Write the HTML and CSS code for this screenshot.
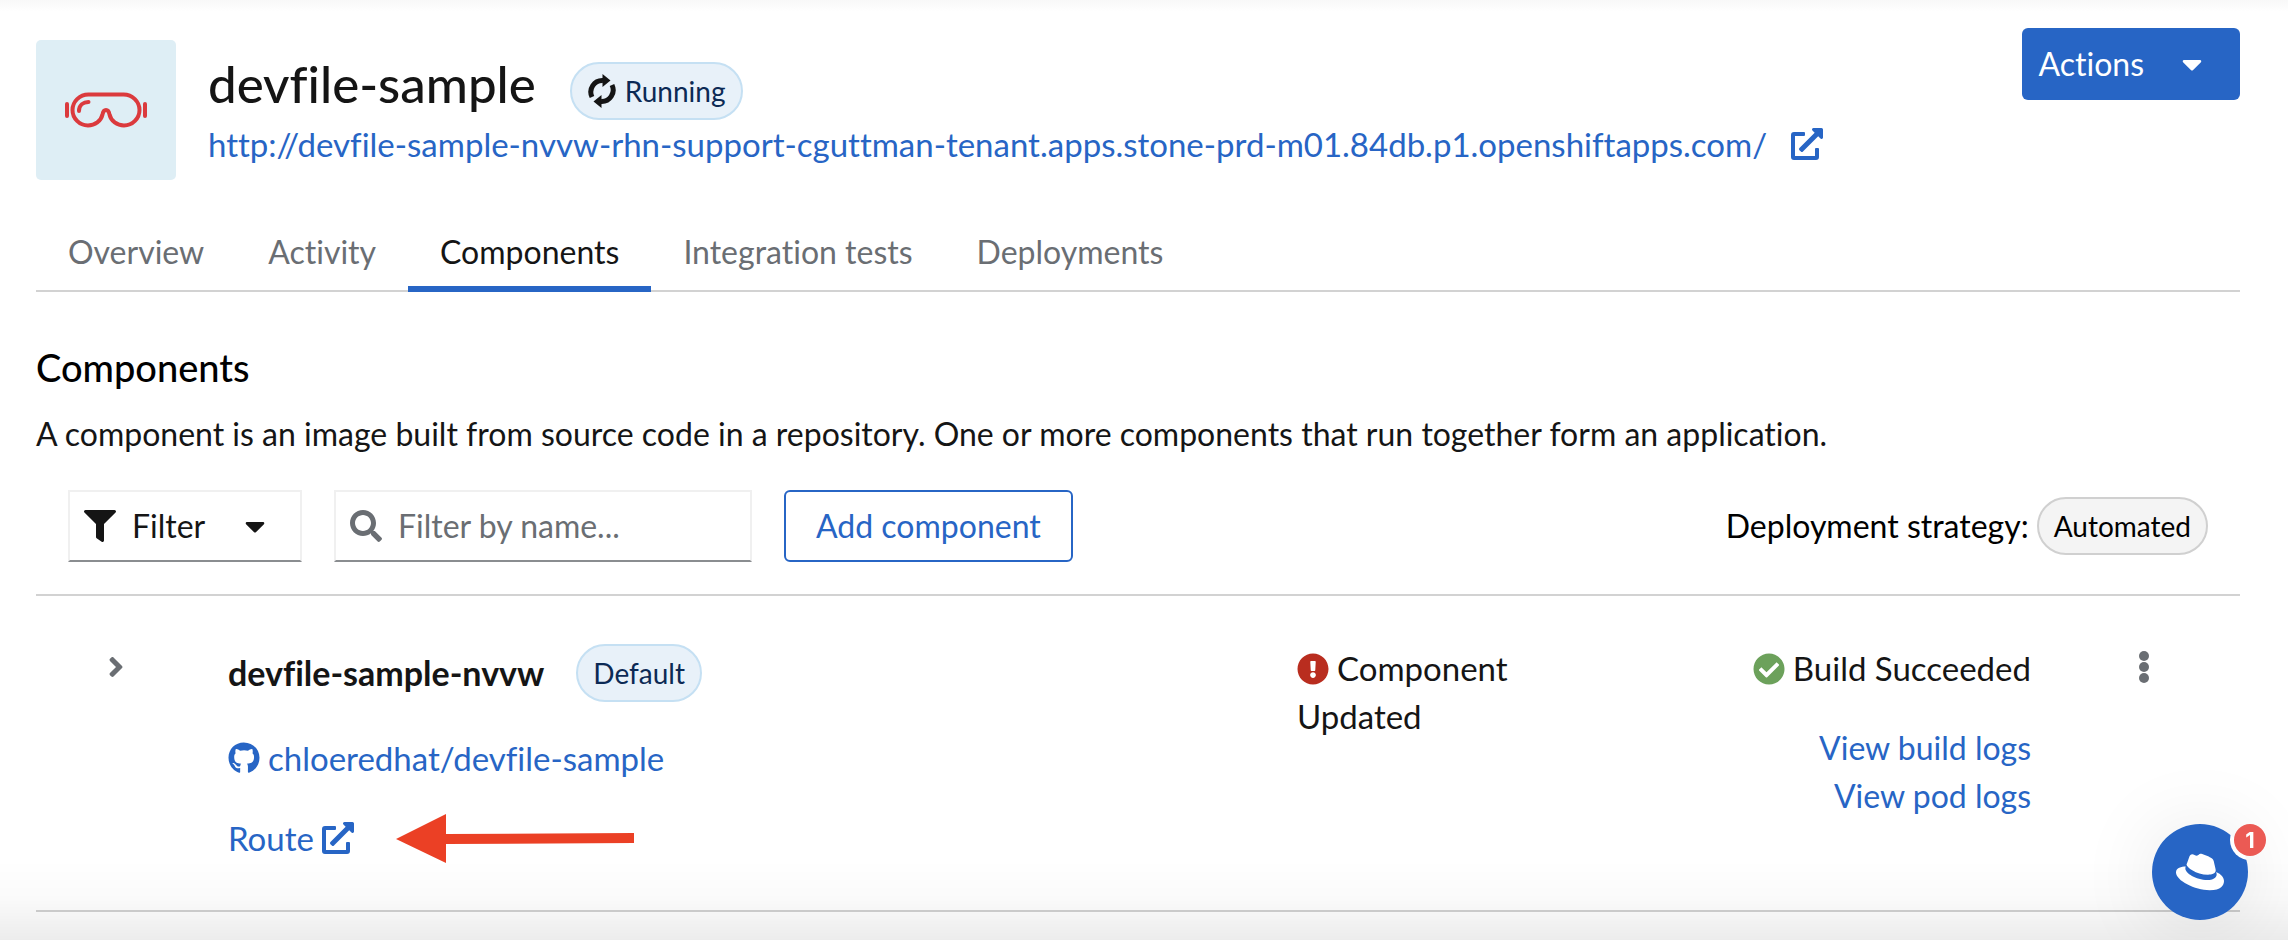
FILE: index.html
```html
<!DOCTYPE html>
<html lang="en">
<head>
<meta charset="utf-8">
<title>devfile-sample</title>
<link rel="stylesheet" href="styles.css">
</head>
<body>
<svg class="defs" aria-hidden="true">
  <symbol id="external" viewBox="0 0 512 512"><path d="M432,320H400a16,16,0,0,0-16,16V448H64V128H208a16,16,0,0,0,16-16V80a16,16,0,0,0-16-16H48A48,48,0,0,0,0,112V464a48,48,0,0,0,48,48H400a48,48,0,0,0,48-48V336A16,16,0,0,0,432,320ZM488,0h-128c-21.37,0-32.05,25.91-17,41l35.73,35.73L135,320.37a24,24,0,0,0,0,34L157.67,377a24,24,0,0,0,34,0L435.28,133.32,471,169c15,15,41,4.5,41-17V24A24,24,0,0,0,488,0Z"/></symbol>
  <symbol id="caret" viewBox="0 0 320 512"><path d="M31.3 192h257.3c17.8 0 26.7 21.5 14.1 34.1L174.1 354.8c-7.8 7.8-20.5 7.8-28.3 0L17.2 226.1C4.6 213.5 13.5 192 31.3 192z"/></symbol>
</svg>

<main class="page">
  <header class="app-header">
    <div class="app-icon">
      <svg viewBox="0 0 84 36" width="84" height="36" fill="none" stroke="#db3a3d" stroke-width="4" stroke-linecap="round">
        <path d="M24.500 2.500H59.500C68.500 2.500 75.500 9.500 75.500 18C75.500 26.500 68.500 33.500 60 33.500C53 33.500 47 29 45.500 22.500C45 19.500 44 18 42 18S39 19.500 38.500 22.500C37 29 31 33.500 24 33.500C15.500 33.500 8.500 26.500 8.500 18C8.500 9.500 15.500 2.500 24.500 2.500Z"/>
        <path d="M3 12V24M81 12V24M15 19C15 13 19.500 10 24.500 10"/>
      </svg>
    </div>
    <div class="app-info">
      <div class="title-row">
        <h1 class="app-title">devfile-sample</h1>
        <span class="label label-blue">
          <svg class="icon-label" viewBox="0 0 30 36" fill="none" stroke="#151515" stroke-width="5"><path d="M5 24A11.500 11.500 0 0 1 16 7.500M25 12A11.500 11.500 0 0 1 14 28.500"/><path d="M15.500 1L23.500 7.500L15.500 14ZM14.500 22L6.500 28.500L14.500 35Z" fill="#151515" stroke="none"/></svg>
          Running
        </span>
      </div>
      <a class="link app-url" href="#">http://devfile-sample-nvvw-rhn-support-cguttman-tenant.apps.stone-prd-m01.84db.p1.openshiftapps.com/ <svg class="icon"><use href="#external"/></svg></a>
    </div>
    <button class="btn btn-primary" type="button">Actions <svg class="icon-caret"><use href="#caret"/></svg></button>
  </header>

  <nav class="tabs">
    <a class="tab" href="#">Overview</a>
    <a class="tab" href="#">Activity</a>
    <a class="tab tab-active" href="#" aria-current="page">Components</a>
    <a class="tab" href="#">Integration tests</a>
    <a class="tab" href="#">Deployments</a>
  </nav>

  <section>
    <h2 class="section-title">Components</h2>
    <p class="section-text">A component is an image built from source code in a repository. One or more components that run together form an application.</p>

    <div class="toolbar">
      <button class="field filter" type="button">
        <svg class="icon" viewBox="0 0 512 512"><path d="M487.976 0H24.028C2.71 0-8.047 25.866 7.058 40.971L192 225.941V432c0 7.831 3.821 15.170 10.237 19.662l80 55.980C298.020 518.690 320 507.493 320 487.980V225.941l184.947-184.970C520.021 25.896 509.338 0 487.976 0z"/></svg>
        Filter
        <svg class="icon-caret"><use href="#caret"/></svg>
      </button>
      <label class="field search">
        <svg class="icon" viewBox="0 0 512 512"><path d="M505 442.700L405.300 343c-4.500-4.500-10.600-7-17-7H372c27.600-35.300 44-79.700 44-128C416 93.100 322.900 0 208 0S0 93.100 0 208s93.100 208 208 208c48.300 0 92.700-16.400 128-44v16.300c0 6.400 2.500 12.500 7 17l99.700 99.700c9.400 9.400 24.600 9.400 33.900 0l28.300-28.300c9.400-9.400 9.400-24.600.1-34zM208 336c-70.700 0-128-57.200-128-128 0-70.700 57.200-128 128-128 70.700 0 128 57.200 128 128 0 70.700-57.200 128-128 128z"/></svg>
        <input class="search-input" type="text" placeholder="Filter by name..." aria-label="Filter by name">
      </label>
      <button class="btn btn-secondary" type="button">Add component</button>
      <div class="strategy">Deployment strategy: <span class="label label-grey">Automated</span></div>
    </div>

    <article class="component">
      <button class="icon-button toggle" type="button" aria-label="Expand">
        <svg viewBox="0 0 256 512" width="16" height="32"><path d="M224.300 273l-136 136c-9.400 9.400-24.600 9.400-33.900 0l-22.600-22.600c-9.400-9.400-9.400-24.600 0-33.900l96.400-96.400-96.400-96.400c-9.400-9.400-9.400-24.600 0-33.900L54.300 103c9.400-9.400 24.600-9.400 33.900 0l136 136c9.500 9.400 9.500 24.600.1 34z"/></svg>
      </button>
      <div class="component-main">
        <div class="name-row"><h3 class="component-name">devfile-sample-nvvw</h3><span class="label label-blue">Default</span></div>
        <a class="link inline-link" href="#"><svg class="icon" viewBox="0 0 496 512"><path d="M165.900 397.400c0 2-2.300 3.600-5.200 3.600-3.300.3-5.600-1.300-5.600-3.600 0-2 2.300-3.600 5.200-3.600 3-.3 5.600 1.300 5.600 3.600zm-31.100-4.500c-.7 2 1.300 4.300 4.300 4.900 2.600 1 5.600 0 6.200-2s-1.300-4.300-4.300-5.200c-2.600-.7-5.500.3-6.200 2.300zm44.200-1.700c-2.900.7-4.900 2.600-4.600 4.900.3 2 2.900 3.300 5.900 2.600 2.900-.7 4.900-2.600 4.600-4.600-.3-1.900-3-3.200-5.900-2.900zM244.800 8C106.100 8 0 113.300 0 252c0 110.900 69.800 205.800 169.500 239.200 12.800 2.300 17.300-5.600 17.300-12.100 0-6.200-.3-40.400-.3-61.400 0 0-70 15-84.700-29.800 0 0-11.400-29.100-27.800-36.600 0 0-22.900-15.700 1.600-15.400 0 0 24.900 2 38.600 25.800 21.900 38.600 58.600 27.500 72.900 20.900 2.300-16 8.800-27.100 16-33.700-55.900-6.200-112.300-14.300-112.300-110.500 0-27.500 7.600-41.300 23.600-58.900-2.600-6.500-11.100-33.300 2.600-67.900 20.900-6.500 69 27 69 27 20-5.600 41.500-8.500 62.800-8.500s42.800 2.900 62.800 8.500c0 0 48.100-33.600 69-27 13.700 34.700 5.200 61.400 2.600 67.900 16 17.700 25.800 31.500 25.800 58.900 0 96.500-58.900 104.200-114.800 110.500 9.200 7.900 17 22.900 17 46.400 0 33.700-.3 75.400-.3 83.600 0 6.500 4.600 14.400 17.300 12.100C428.200 457.800 496 362.900 496 252 496 113.300 383.500 8 244.800 8z"/></svg>chloeredhat/devfile-sample</a>
        <div class="route-row">
          <a class="link inline-link" href="#">Route<svg class="icon"><use href="#external"/></svg></a>
          <svg class="arrow" viewBox="0 0 238 50" width="238" height="50" fill="#eb4025"><path d="M0 26L50 1V21L238 20V30L50 31V50Z"/></svg>
        </div>
      </div>
      <div class="status"><svg class="icon icon-text icon-danger" viewBox="0 0 512 512"><path d="M504 256c0 136.997-111.043 248-248 248S8 392.997 8 256C8 119.083 119.043 8 256 8s248 111.083 248 248zm-248 50c-25.405 0-46 20.595-46 46s20.595 46 46 46 46-20.595 46-46-20.595-46-46-46zm-43.673-165.346l7.418 136c.347 6.364 5.609 11.346 11.982 11.346h48.546c6.373 0 11.635-4.982 11.982-11.346l7.418-136c.375-6.874-5.098-12.654-11.982-12.654h-63.383c-6.884 0-12.356 5.780-11.981 12.654z"/></svg>Component Updated</div>
      <div class="build">
        <div class="build-state"><svg class="icon icon-text icon-success" viewBox="0 0 512 512"><path d="M504 256c0 136.967-111.033 248-248 248S8 392.967 8 256 119.033 8 256 8s248 111.033 248 248zM227.314 387.314l184-184c6.248-6.248 6.248-16.379 0-22.627l-22.627-22.627c-6.248-6.249-16.379-6.249-22.628 0L216 308.118l-70.059-70.059c-6.248-6.248-16.379-6.248-22.628 0l-22.627 22.627c-6.248 6.248-6.248 16.379 0 22.627l104 104c6.249 6.249 16.379 6.249 22.628.001z"/></svg>Build Succeeded</div>
        <div class="logs"><a class="link" href="#">View build logs</a><a class="link" href="#">View pod logs</a></div>
      </div>
      <button class="icon-button kebab" type="button" aria-label="Component actions">
        <svg viewBox="0 0 12 32" width="12" height="32"><circle cx="6" cy="5" r="5"/><circle cx="6" cy="16" r="5"/><circle cx="6" cy="27" r="5"/></svg>
      </button>
    </article>
  </section>
</main>

<div class="fade"></div>
<button class="chat" type="button" aria-label="Open chat, 1 unread">
  <svg class="chat-icon" viewBox="0 0 96 96" width="96" height="96">
    <defs><mask id="notch"><rect width="96" height="96" fill="#fff"/><circle cx="98" cy="16" r="20" fill="#000"/></mask></defs>
    <circle cx="48" cy="48" r="48" fill="#2765c5" mask="url(#notch)"/>
    <svg x="24" y="24" width="48" height="48" viewBox="0 0 512 512"><path fill="#fff" d="M341.520 285.560c33.650 0 82.340-6.940 82.340-47 .22-6.740.86-1.820-20.880-96.240-4.620-19.150-8.680-27.840-42.310-44.650-26.090-13.340-82.920-35.370-99.730-35.370-15.660 0-20.200 20.170-38.870 20.170-18 0-31.310-15.060-48.120-15.060-16.140 0-26.660 11-34.780 33.620-27.500 77.550-26.280 74.270-26.120 78.270 0 24.800 97.640 106.260 228.470 106.260M429 254.840c4.650 22 4.650 24.350 4.650 27.250 0 37.660-42.330 58.560-98 58.560-125.740.08-235.910-73.650-235.910-122.330a49.550 49.550 0 0 1 4.060-19.720C58.560 200.860 0 208.930 0 260.630c0 84.670 200.630 189 359.490 189 121.790 0 152.510-55.080 152.510-98.590 0-34.200-29.590-73-83-96.200"/></svg>
  </svg>
  <span class="badge">1</span>
</button>
</body>
</html>
```
FILE: styles.css
```css
* { box-sizing: border-box; }

body {
  margin: 0;
  background: #fff;
  color: #151515;
  font: 32px/48px Lato, "Open Sans", sans-serif;
  font-variant-ligatures: none;
}

button, input { font: inherit; font-variant-ligatures: none; color: inherit; }
button { cursor: pointer; }
h1, h2, h3, p { margin: 0; }

.defs { position: absolute; width: 0; height: 0; }
.icon { width: 32px; height: 32px; flex: none; fill: currentColor; }
.icon-caret { width: 20px; height: 32px; fill: currentColor; }

.page {
  padding: 28px 48px 0 36px;
  background: linear-gradient(#f8f8f8, #fff 12px);
}

.link { color: #2765c5; text-decoration: none; }
.app-url, .inline-link, .status, .build-state { font-size: 33px; }

.app-header { display: flex; align-items: flex-start; }
.app-icon {
  display: flex;
  align-items: center;
  justify-content: center;
  width: 140px;
  height: 140px;
  margin: 12px 32px 0 0;
  border-radius: 5px;
  background: #deeef5;
}
.app-info { flex: 1; padding-top: 24px; }
.title-row { display: flex; align-items: flex-end; gap: 34px; height: 68px; }
.app-title { font-size: 51px; font-weight: 500; line-height: 72px; }
.app-url { display: flex; align-items: center; gap: 24px; }

.label {
  display: inline-flex;
  align-items: center;
  height: 58px;
  padding: 0 15px;
  border: 2px solid;
  border-radius: 30px;
  font-size: 28px;
  line-height: 42px;
}
.label-blue { gap: 8px; border-color: #c5e0f3; background: #e8f1f9; color: #0c2a55; }
.label-grey { border-color: #d0d0d0; background: #f4f4f4; }
.icon-label { width: 30px; height: 36px; }

.btn { height: 72px; border-radius: 6px; }
.btn-primary {
  display: flex;
  align-items: center;
  gap: 38px;
  padding: 0 38px 0 16px;
  border: 0;
  background: #2765c5;
  color: #fff;
}
.btn-secondary {
  padding: 0 30px;
  border: 2px solid #2765c5;
  background: #fff;
  color: #2765c5;
}

.tabs { display: flex; margin-top: 32px; border-bottom: 2px solid #d2d2d2; }
.tab {
  height: 80px;
  margin-bottom: -2px;
  padding: 16px 32px;
  color: #6a6e73;
  text-decoration: none;
}
.tab-active { border-bottom: 6px solid #2765c5; color: #151515; }

.section-title {
  margin-top: 48px;
  color: #000;
  font-size: 38px;
  font-weight: 500;
  line-height: 54px;
}
.section-text { margin-top: 16px; }

.toolbar {
  display: flex;
  align-items: center;
  gap: 32px;
  margin-top: 32px;
  padding: 0 32px 32px;
  border-bottom: 2px solid #d2d2d2;
}
.field {
  display: flex;
  align-items: center;
  gap: 16px;
  height: 72px;
  padding: 0 14px;
  border: 2px solid #f0f0f0;
  border-bottom-color: #8a8d90;
  background: #fff;
}
.filter { width: 234px; }
.filter .icon-caret { margin-left: 24px; }
.search { width: 418px; color: #6a6e73; }
.search-input { flex: 1; min-width: 0; padding: 0; border: 0; outline: 0; background: none; }
.search-input::placeholder { color: #6a6e73; opacity: 1; }
.strategy { display: flex; align-items: center; gap: 8px; margin-left: auto; color: #000; }

.component {
  display: grid;
  grid-template-columns: 128px 3fr 1fr 1fr 145px;
  column-gap: 64px;
  padding: 48px 0;
  border-bottom: 2px solid #d2d2d2;
}
.icon-button {
  display: flex;
  justify-content: center;
  align-self: start;
  padding: 7px 0;
  border: 0;
  background: none;
  fill: #6a6e73;
}
.toggle { padding-left: 32px; }
.kebab { padding-right: 48px; }
.name-row { display: flex; align-items: center; gap: 32px; height: 58px; }
.component-name { font-size: 34px; font-weight: 700; line-height: 48px; }
.component-main { display: grid; justify-items: start; align-content: start; gap: 32px; }
.inline-link { display: flex; align-items: center; gap: 8px; }
.route-row { display: flex; align-items: center; gap: 42px; height: 48px; }
.status { padding-right: 32px; }
.icon-text { margin-right: 8px; vertical-align: -4px; }
.icon-danger { fill: #b92d1f; }
.icon-success { fill: #6ca15b; }
.build { text-align: right; }
.logs { display: flex; flex-direction: column; margin-top: 32px; }

.fade {
  position: fixed;
  inset: auto 0 0;
  height: 80px;
  background: linear-gradient(#0000, #00000005 50%, #00000013);
  pointer-events: none;
}

.chat {
  position: fixed;
  right: 40px;
  bottom: 20px;
  width: 96px;
  height: 96px;
  padding: 0;
  border: 0;
  border-radius: 50%;
  background: none;
  box-shadow: 0 4px 80px #0000001a;
}
.chat-icon { display: block; }
.badge {
  position: absolute;
  top: 0;
  right: -18px;
  width: 32px;
  height: 32px;
  border-radius: 50%;
  background: #eb5a54;
  color: #fff;
  font: 700 22px/32px Inter, sans-serif;
}
```
